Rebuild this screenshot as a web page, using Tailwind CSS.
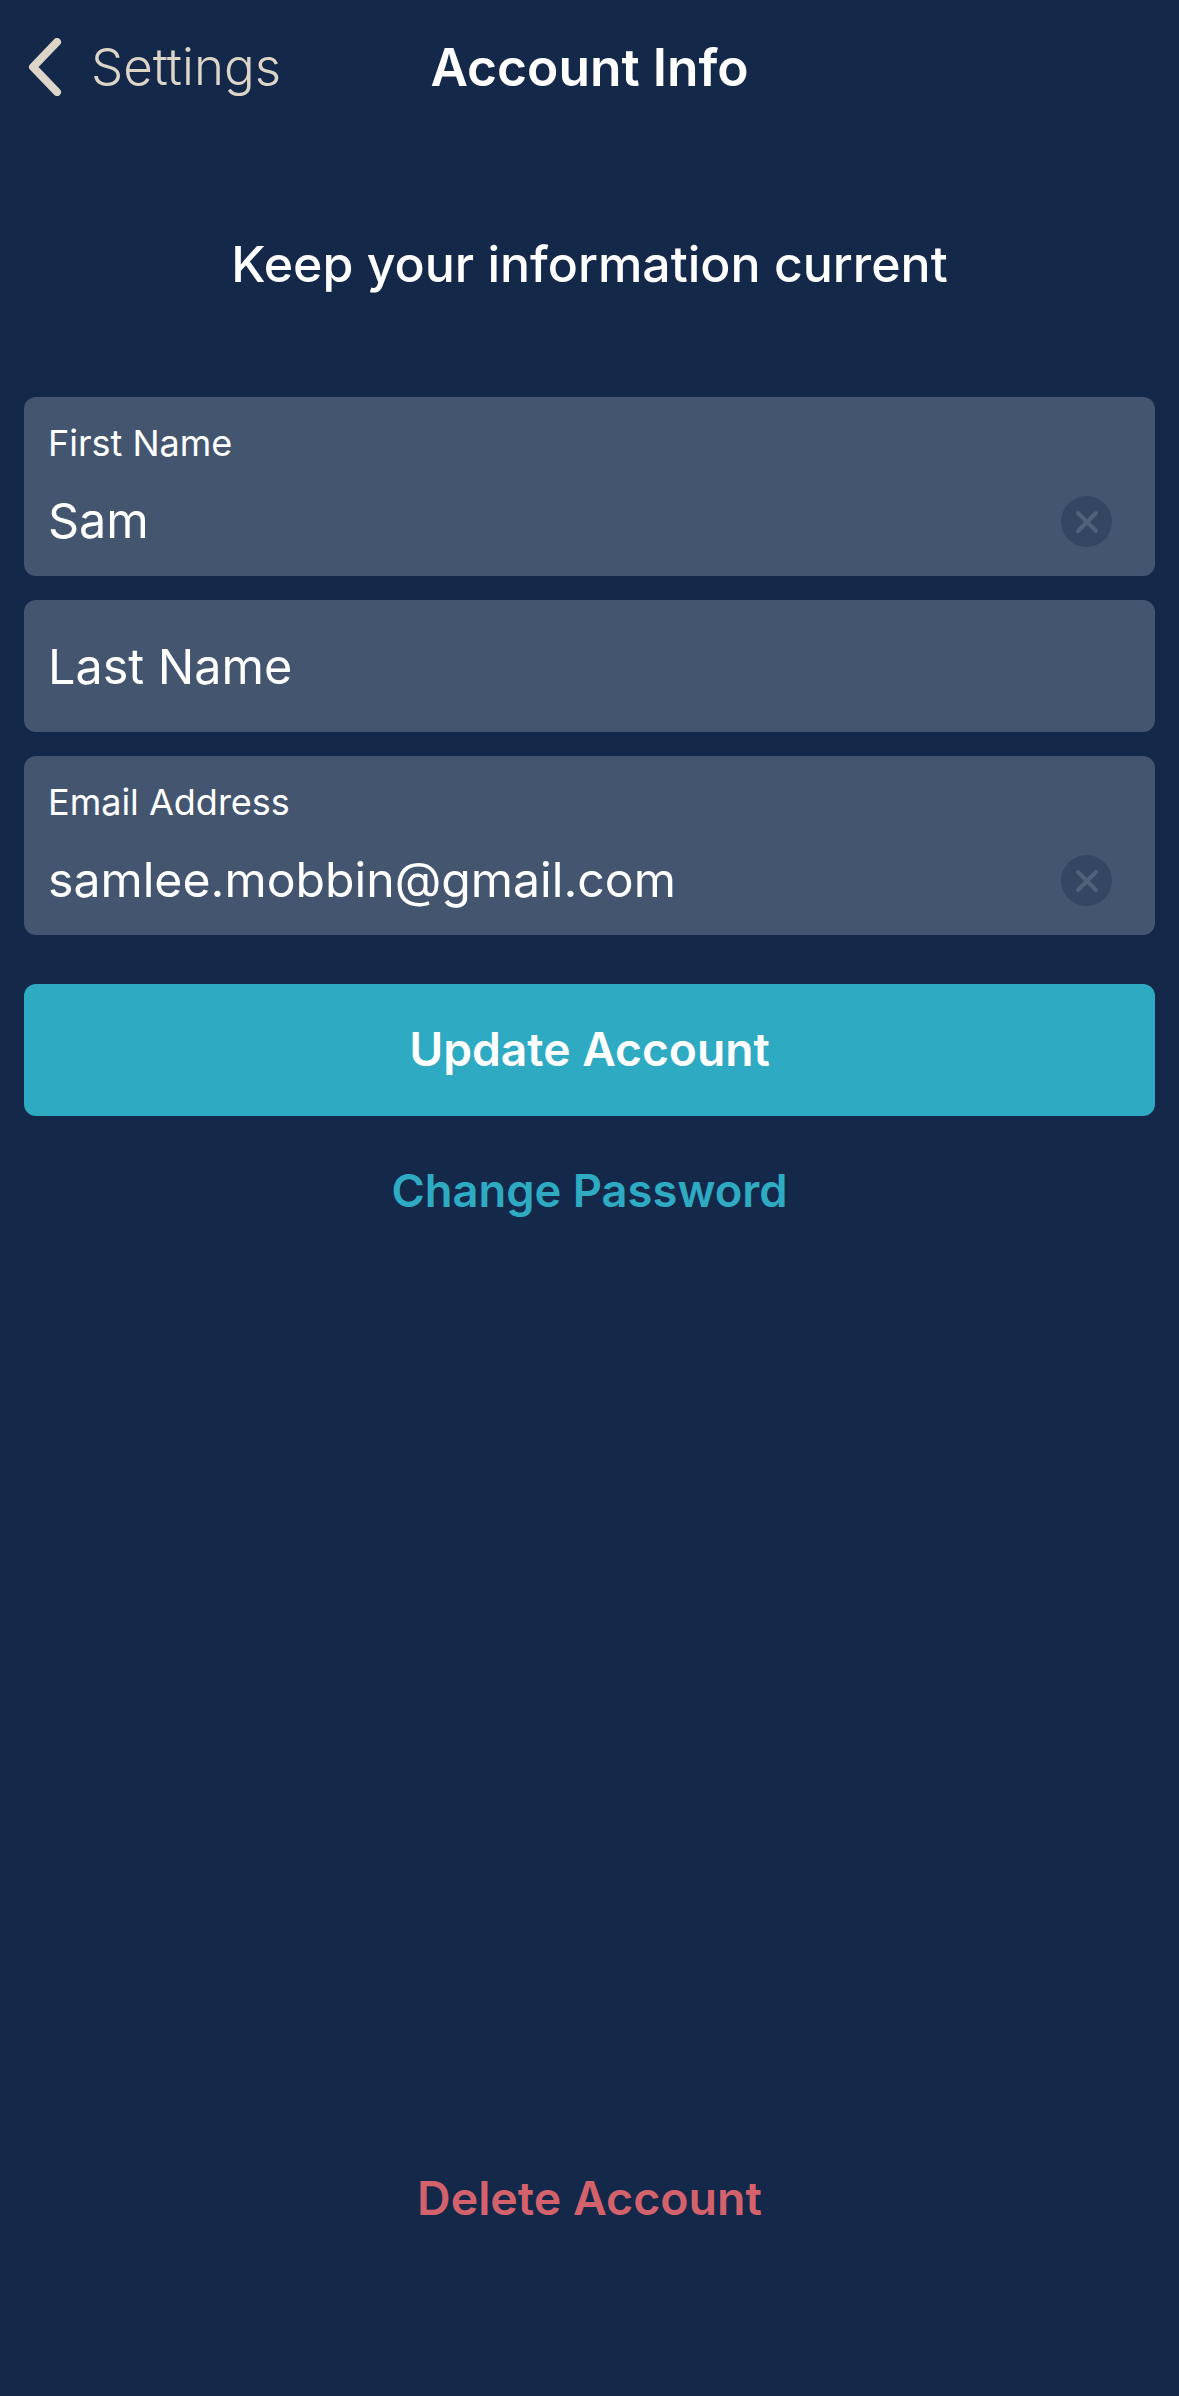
<!DOCTYPE html>
<html lang="en">
<head>
    <meta charset="UTF-8">
    <meta name="viewport" content="width=device-width, initial-scale=1.0">
    <title>Account Info</title>
    <script src="https://cdn.jsdelivr.net/npm/@tailwindcss/browser@4"></script>
</head>
<body class="bg-[#14284a] text-white font-['Inter',sans-serif]">
    <div class="w-[1179px] h-[2396px] flex flex-col overflow-hidden">

        <!-- Nav bar -->
        <header class="relative h-[134px] shrink-0 flex items-center justify-center">
            <div class="absolute left-[28px] top-[38px] flex items-center text-[#ddd5c8]">
                <svg class="w-[34px] h-[58px]" viewBox="0 0 34 58" fill="none" stroke="currentColor" stroke-width="8" stroke-linecap="round" stroke-linejoin="round"><path d="M29 4 L5 29 L29 54" /></svg>
                <span class="ml-[29px] text-[51px] leading-[58px] font-light">Settings</span>
            </div>
            <h1 class="text-[51.5px] leading-[58px] font-semibold">Account Info</h1>
        </header>

        <p class="mt-[90px] text-center text-[50px] leading-[80px] font-medium">Keep your information current</p>

        <!-- Form -->
        <div class="mt-[93px] mx-[24px] flex flex-col gap-[24px]">
            <div class="h-[179px] rounded-[12px] bg-[#44566f] pl-[24px] pr-[43px] pt-[24px] flex items-end justify-between">
                <div class="self-stretch">
                    <p class="text-[36px] leading-[45px]">First Name</p>
                    <p class="mt-[26px] text-[48.5px] leading-[58px]">Sam</p>
                </div>
                <span class="mb-[29px] w-[51px] h-[51px] rounded-full bg-[#344661] flex items-center justify-center">
                    <svg class="w-[24px] h-[24px]" viewBox="0 0 24 24" stroke="#506279" stroke-width="4" fill="none" stroke-linecap="round"><path d="M3 3 L21 21 M21 3 L3 21" /></svg>
                </span>
            </div>
            <div class="h-[132px] rounded-[12px] bg-[#44566f] px-[24px] pt-[2px] flex items-center">
                <p class="text-[48.5px] leading-[58px]">Last Name</p>
            </div>
            <div class="h-[179px] rounded-[12px] bg-[#44566f] pl-[24px] pr-[43px] pt-[24px] flex items-end justify-between">
                <div class="self-stretch">
                    <p class="text-[36px] leading-[45px]">Email Address</p>
                    <p class="mt-[26px] text-[48.2px] leading-[58px]">samlee.mobbin@gmail.com</p>
                </div>
                <span class="mb-[29px] w-[51px] h-[51px] rounded-full bg-[#344661] flex items-center justify-center">
                    <svg class="w-[24px] h-[24px]" viewBox="0 0 24 24" stroke="#506279" stroke-width="4" fill="none" stroke-linecap="round"><path d="M3 3 L21 21 M21 3 L3 21" /></svg>
                </span>
            </div>
        </div>

        <button class="mt-[49px] mx-[24px] h-[132px] shrink-0 rounded-[12px] bg-[#2eaac3] text-[46.2px] font-semibold">Update Account</button>
        <a class="mt-[47px] text-center text-[45.3px] leading-[56px] font-semibold text-[#2eaac3]">Change Password</a>

        <a class="mt-auto mb-[170px] text-center text-[46.5px] leading-[56px] font-semibold text-[#d4626c]">Delete Account</a>
    </div>
</body>
</html>
